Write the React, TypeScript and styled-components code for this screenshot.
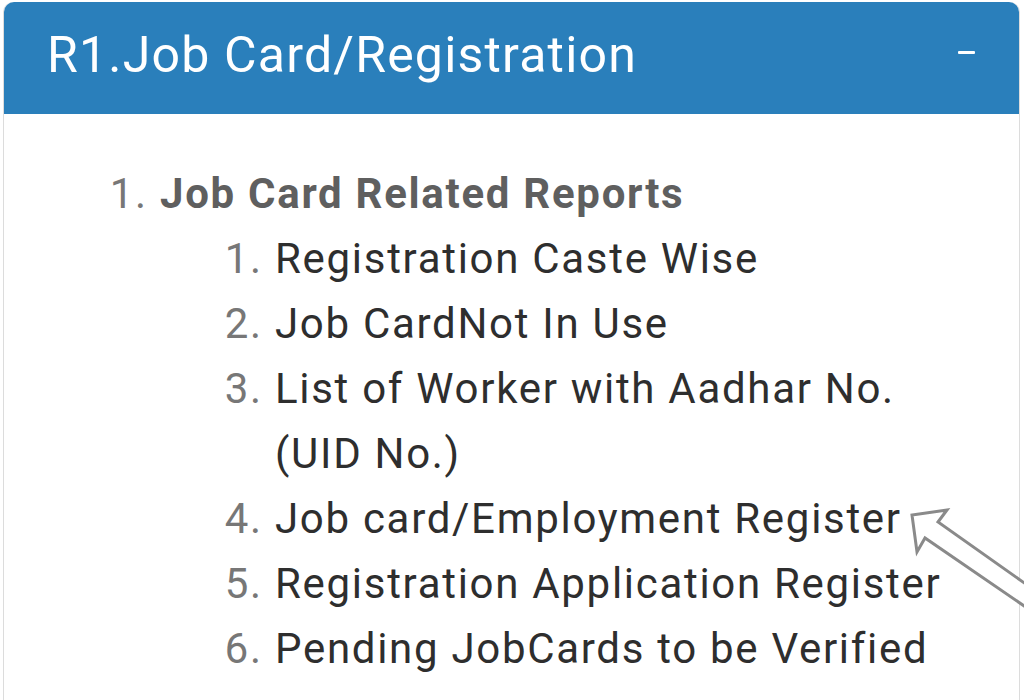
import React from "react";
import styled, { createGlobalStyle } from "styled-components";

const GlobalStyle = createGlobalStyle`
  html, body {
    margin: 0;
    padding: 0;
    background: #ffffff;
    font-family: Roboto, "Noto Sans", "Liberation Sans", sans-serif;
  }
`;

const Page = styled.div`
  position: relative;
  height: 700px;
  overflow: hidden;
  padding: 2px 4px 0 3px;
  box-sizing: border-box;
`;

const Panel = styled.div`
  border: 1px solid #dcdcdc;
  border-top: none;
  border-radius: 10px 10px 0 0;
  height: 760px;
  background: #fff;
`;

const Header = styled.div`
  display: flex;
  align-items: center;
  justify-content: space-between;
  height: 112px;
  padding: 0 44px 0 43px;
  background: #2a7fbb;
  border-radius: 10px 10px 0 0;
  color: #ffffff;
  box-sizing: border-box;
`;

const Title = styled.h3`
  margin: 0;
  font-weight: 400;
  font-size: 50px;
  letter-spacing: 1.2px;
  padding-bottom: 6px;
`;

const Toggle = styled.span`
  display: block;
  width: 17px;
  height: 3px;
  margin-bottom: 12px;
  background: #ffffff;
  border-radius: 1px;
`;

const Body = styled.div`
  padding-top: 47px;
`;

const OuterList = styled.ol`
  margin: 0;
  padding-left: 156px;
  font-size: 42px;
  line-height: 65px;
  letter-spacing: 1.7px;
  li::marker {
    color: #777;
    font-weight: 400;
  }
`;

const Section = styled.li``;

const SectionTitle = styled.span`
  font-weight: 700;
  color: #5f5f5f;
`;

const InnerList = styled.ol`
  margin: 0;
  padding-left: 115px;
`;

const Item = styled.li`
  color: #2e2e2e;
  padding-right: 55px;
`;

const Arrow = styled.svg`
  position: absolute;
  left: 0;
  top: 0;
  pointer-events: none;
`;

const reports = [
  "Registration Caste Wise",
  "Job CardNot In Use",
  "List of Worker with Aadhar No. (UID No.)",
  "Job card/Employment Register",
  "Registration Application Register",
  "Pending JobCards to be Verified",
];

export default function App() {
  return (
    <>
      <GlobalStyle />
      <Page>
        <Panel>
          <Header>
            <Title>R1.Job Card/Registration</Title>
            <Toggle />
          </Header>
          <Body>
            <OuterList>
              <Section>
                <SectionTitle>Job Card Related Reports</SectionTitle>
                <InnerList>
                  {reports.map((r) => (
                    <Item key={r}>{r}</Item>
                  ))}
                </InnerList>
              </Section>
            </OuterList>
          </Body>
        </Panel>
        <Arrow width="1024" height="700" viewBox="0 0 1024 700">
          <path
            d="M1030 587 L938 522 L947 510 L912 515 L917 552 L925 538 L1030 610"
            fill="#ffffff"
            stroke="#8a8a8a"
            strokeWidth="3"
            strokeLinejoin="miter"
          />
        </Arrow>
      </Page>
    </>
  );
}
